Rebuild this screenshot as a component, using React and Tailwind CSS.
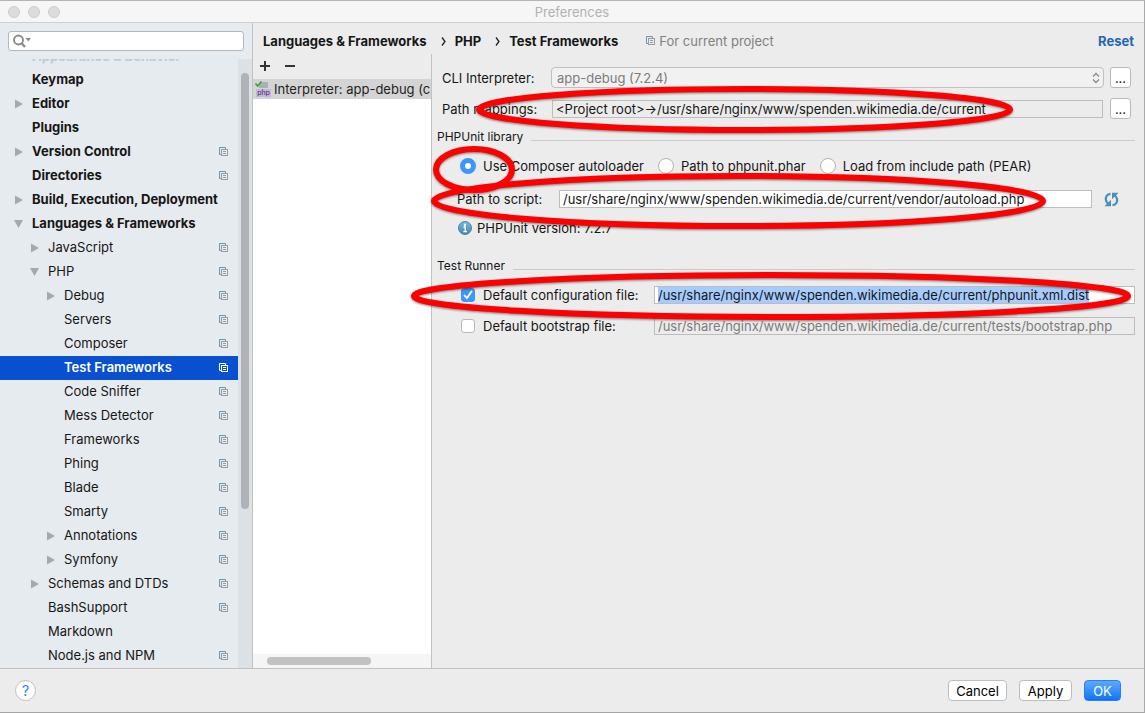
import { useEffect, useRef } from "react";

const tree = [
  { label: "Keymap", level: 0 },
  { label: "Editor", level: 0, arrow: "right" },
  { label: "Plugins", level: 0 },
  { label: "Version Control", level: 0, arrow: "right", project: true },
  { label: "Directories", level: 0, project: true },
  { label: "Build, Execution, Deployment", level: 0, arrow: "right" },
  { label: "Languages & Frameworks", level: 0, arrow: "down" },
  { label: "JavaScript", level: 1, arrow: "right", project: true },
  { label: "PHP", level: 1, arrow: "down", project: true },
  { label: "Debug", level: 2, arrow: "right", project: true },
  { label: "Servers", level: 2, project: true },
  { label: "Composer", level: 2, project: true },
  { label: "Test Frameworks", level: 2, project: true, selected: true },
  { label: "Code Sniffer", level: 2, project: true },
  { label: "Mess Detector", level: 2, project: true },
  { label: "Frameworks", level: 2, project: true },
  { label: "Phing", level: 2, project: true },
  { label: "Blade", level: 2, project: true },
  { label: "Smarty", level: 2, project: true },
  { label: "Annotations", level: 2, arrow: "right", project: true },
  { label: "Symfony", level: 2, arrow: "right", project: true },
  { label: "Schemas and DTDs", level: 1, arrow: "right", project: true },
  { label: "BashSupport", level: 1, project: true },
  { label: "Markdown", level: 1 },
  { label: "Node.js and NPM", level: 1, project: true },
];

const indents = ["pl-[14px]", "pl-[30px]", "pl-[46px]"];

function ProjectIcon({ light }) {
  const back = light ? "#ffffff" : "#5f9ab8";
  const front = light ? "#ffffff" : "#9a9da0";
  return (
    <svg width="10" height="10" viewBox="0 0 10 10" className="shrink-0" aria-hidden="true">
      <path d="M6.500 2V0.500H0.500V7.500H2" fill="none" stroke={back} />
      <rect x="2.500" y="2.500" width="6" height="6" fill="none" stroke={front} />
      <path d="M4 4.500H7M4 6.500H7" stroke={front} />
    </svg>
  );
}

function Arrow({ dir }) {
  return (
    <svg width="10" height="10" viewBox="0 0 10 10" className="shrink-0" aria-hidden="true">
      {dir === "right" && <path d="M1 0.500L9 5L1 9.500Z" fill="#a8a8a8" />}
      {dir === "down" && <path d="M0 1H9L4.500 9Z" fill="#a8a8a8" />}
    </svg>
  );
}

function TreeRow({ item }) {
  const weight = item.level === 0 ? "font-bold" : item.selected ? "font-semibold" : "";
  const colors = item.selected ? "bg-[#0850d0] text-white" : "text-[#161616]";
  return (
    <li>
      <button type="button" className={`flex h-6 w-full items-center gap-2 pr-[9px] text-left ${indents[item.level]} ${weight} ${colors}`}>
        <Arrow dir={item.arrow} />
        <span className="flex-1 pb-[2px] whitespace-nowrap">{item.label}</span>
        {item.project && <ProjectIcon light={item.selected} />}
      </button>
    </li>
  );
}

function Sidebar() {
  return (
    <aside className="flex w-[253px] shrink-0 flex-col border-r border-[#bfc2c5] bg-[#e6ebef]">
      <label className="mx-2 mt-2 mb-2 flex h-5 items-center rounded-[3px] border border-[#b4b8bb] bg-white pl-1">
        <svg width="20" height="14" viewBox="0 0 20 14" className="shrink-0" aria-hidden="true">
          <circle cx="5.500" cy="6" r="4.500" fill="none" stroke="#8a8a8a" strokeWidth="1.900" />
          <path d="M8.500 9L12 13" stroke="#8a8a8a" strokeWidth="2.200" />
          <path d="M12.500 4H18L15.250 7.500Z" fill="#8a8a8a" />
        </svg>
        <input type="text" aria-label="Search settings" className="h-full min-w-0 flex-1 bg-transparent outline-none" />
      </label>
      <div className="flex min-h-0 flex-1">
        <nav className="min-w-0 flex-1 overflow-hidden">
          <ul className="-mt-[15px]">
            <li className="flex h-6 items-center pl-8 font-bold whitespace-nowrap text-[#c3cad0]">
              <span>Appearance &amp; Behavior</span>
            </li>
            {tree.map((item) => (
              <TreeRow key={item.label} item={item} />
            ))}
          </ul>
        </nav>
        <div className="w-[14px] bg-[#dce1e5] px-[3px] pt-[14px]">
          <div className="h-[436px] rounded-full bg-[#afb3b7]" />
        </div>
      </div>
    </aside>
  );
}

function FrameworkList() {
  return (
    <section className="flex w-[179px] shrink-0 flex-col border-r border-[#c2c2c2]">
      <div className="flex h-[25px] items-center gap-[13px] pb-[2px] pl-[6px]">
        <button type="button" aria-label="Add">
          <svg width="12" height="12" viewBox="0 0 12 12"><path d="M6 1V11M1 6H11" stroke="#333" strokeWidth="2" /></svg>
        </button>
        <button type="button" aria-label="Remove">
          <svg width="12" height="12" viewBox="0 0 12 12"><path d="M1 6H11" stroke="#333" strokeWidth="2" /></svg>
        </button>
      </div>
      <div className="flex min-h-0 flex-1 flex-col bg-white">
        <button type="button" className="flex h-5 w-full items-center gap-[3px] overflow-hidden bg-[#d4d4d4] pl-[2px] text-left text-[#1f1f1f]">
          <svg width="16" height="16" viewBox="0 0 16 16" className="shrink-0" aria-hidden="true">
            <path d="M5 1H13V7H4V5Z" fill="#a9b1b7" />
            <path d="M0.500 2.500L2.700 5L6.500 0.500" fill="none" stroke="#3fa62b" strokeWidth="1.700" />
            <rect x="1" y="8" width="15" height="8" fill="#c7b4e4" />
            <text x="8.500" y="14" textAnchor="middle" fontSize="7" fontFamily="Inter, sans-serif" fill="#3a3048">php</text>
          </svg>
          <span className="whitespace-nowrap">Interpreter: app-debug (c</span>
        </button>
        <div className="flex-1" />
        <div className="h-[14px] bg-[#f5f5f5] pt-[3px] pl-[14px]">
          <div className="h-2 w-[104px] rounded-full bg-[#c2c2c2]" />
        </div>
      </div>
    </section>
  );
}

function GroupTitle({ children }) {
  return (
    <div className="flex h-5 items-center gap-2 pl-[5px] text-xs">
      <h2>{children}</h2>
      <div className="mt-[7px] h-px flex-1 bg-[#cbcbcb]" />
    </div>
  );
}

function MoreButton({ label }) {
  return (
    <button type="button" aria-label={label} className="flex h-[21px] w-[21px] items-center justify-center rounded-[3px] border border-[#b9b9b9] bg-white">
      ...
    </button>
  );
}

function Radio({ id, label, checked }) {
  return (
    <div className="flex items-center gap-[7px]">
      <input
        type="radio"
        name="library"
        id={id}
        defaultChecked={checked}
        className="h-4 w-4 appearance-none rounded-full border border-[#b2b2b2] bg-white checked:border-[5px] checked:border-[#3b97fc]"
      />
      <label htmlFor={id} className="whitespace-nowrap">{label}</label>
    </div>
  );
}

function Check({ id, label, checked }) {
  return (
    <div className="flex w-[193px] shrink-0 items-center gap-2">
      <span className="grid">
        <input
          type="checkbox"
          id={id}
          defaultChecked={checked}
          className="peer col-start-1 row-start-1 h-[14px] w-[14px] appearance-none rounded-[3px] border border-[#b8b8b8] bg-white checked:border-[#3b97fc] checked:bg-[#3b97fc]"
        />
        <svg width="14" height="14" viewBox="0 0 14 14" className="pointer-events-none invisible col-start-1 row-start-1 peer-checked:visible" aria-hidden="true">
          <path d="M3.500 7.500L6 10L10.500 3.500" fill="none" stroke="#fff" strokeWidth="1.800" strokeLinecap="round" />
        </svg>
      </span>
      <label htmlFor={id} className="whitespace-nowrap">{label}</label>
    </div>
  );
}

function SettingsForm() {
  const configRef = useRef(null);
  useEffect(() => {
    configRef.current.focus();
    configRef.current.select();
  }, []);

  return (
    <form className="min-w-0 flex-1 pt-[13px] pr-[9px] text-[#161616]">
      <div className="flex h-[21px] items-center pl-[10px]">
        <label htmlFor="cli" className="w-[109px] shrink-0 whitespace-nowrap">CLI Interpreter:</label>
        <div className="grid min-w-0 flex-1 items-center">
          <select id="cli" disabled className="col-start-1 row-start-1 h-[21px] w-full appearance-none rounded-[4px] border border-[#c0c0c0] bg-[#f1f1f1] pl-[5px] text-[#7b7b7b] opacity-100">
            <option>app-debug (7.2.4)</option>
          </select>
          <svg width="8" height="12" viewBox="0 0 8 12" className="pointer-events-none col-start-1 row-start-1 mr-1 justify-self-end" aria-hidden="true">
            <path d="M1 4.500L4 1.500L7 4.500M1 7.500L4 10.500L7 7.500" fill="none" stroke="#8a8a8a" strokeWidth="1.300" />
          </svg>
        </div>
        <div className="mr-1 ml-[6px]"><MoreButton label="Choose interpreter" /></div>
      </div>

      <div className="mt-[10px] flex h-[21px] items-center pl-[10px]">
        <label htmlFor="mappings" className="w-[110px] shrink-0 whitespace-nowrap">Path mappings:</label>
        <input id="mappings" readOnly defaultValue="<Project root>→/usr/share/nginx/www/spenden.wikimedia.de/current" className="h-[18px] min-w-0 flex-1 border border-[#bdbdbd] bg-transparent px-[3px] outline-none" />
        <div className="mr-1 ml-[7px]"><MoreButton label="Edit path mappings" /></div>
      </div>

      <div className="mt-2"><GroupTitle>PHPUnit library</GroupTitle></div>

      <fieldset className="mt-[11px] flex gap-[14px] pl-7">
        <Radio id="composer" label="Use Composer autoloader" checked />
        <Radio id="phar" label="Path to phpunit.phar" />
        <Radio id="pear" label="Load from include path (PEAR)" />
      </fieldset>

      <div className="mt-4 flex h-[18px] items-center pr-4 pl-[25px]">
        <label htmlFor="script" className="w-[102px] shrink-0 whitespace-nowrap">Path to script:</label>
        <input id="script" defaultValue="/usr/share/nginx/www/spenden.wikimedia.de/current/vendor/autoload.php" className="mr-3 h-[18px] min-w-0 flex-1 border border-[#bdbdbd] bg-white px-[3px] outline-none" />
        <button type="button" aria-label="Refresh version">
          <svg width="15" height="15" viewBox="0 0 15 15">
            <path d="M6.500 1.800C3 2 1.300 5 2 8.200C2.300 9.500 3 10.700 4.500 12" fill="none" stroke="#4a8fb8" strokeWidth="2.200" />
            <path d="M0.500 14.200H7V7.800Z" fill="#4a8fb8" />
            <path d="M8.500 13.200C12 13 13.700 10 13 6.800C12.700 5.500 12 4.300 10.500 3" fill="none" stroke="#4a8fb8" strokeWidth="2.200" />
            <path d="M14.500 0.800H8V7.200Z" fill="#4a8fb8" />
          </svg>
        </button>
      </div>

      <div className="mt-[10px] flex h-5 items-center gap-[5px] pl-[26px]">
        <svg width="14" height="14" viewBox="0 0 14 14" aria-hidden="true">
          <defs>
            <linearGradient id="info" x1="0" y1="0" x2="0" y2="1">
              <stop offset="0" stopColor="#7db9d8" />
              <stop offset="1" stopColor="#3f86b0" />
            </linearGradient>
          </defs>
          <circle cx="7" cy="7" r="6.500" fill="url(#info)" stroke="#4587ac" />
          <circle cx="7" cy="3.700" r="1.200" fill="#fff" />
          <path d="M5.500 6H7.200V10.500M5.300 10.700H9" fill="none" stroke="#fff" strokeWidth="1.300" />
        </svg>
        <span>PHPUnit version: 7.2.7</span>
      </div>

      <div className="mt-[18px]"><GroupTitle>Test Runner</GroupTitle></div>

      <div className="mt-[10px] flex h-[18px] items-center pl-[29px]">
        <Check id="use-config" label="Default configuration file:" checked />
        <input
          ref={configRef}
          aria-label="Configuration file path"
          defaultValue="/usr/share/nginx/www/spenden.wikimedia.de/current/phpunit.xml.dist"
          className="h-[18px] min-w-0 flex-1 border border-[#bdbdbd] bg-white px-[3px] caret-transparent outline-none selection:bg-[#a6ccff] selection:text-[#161616]"
        />
      </div>
      <div className="mt-[13px] flex h-[18px] items-center pl-[29px]">
        <Check id="use-bootstrap" label="Default bootstrap file:" />
        <input
          disabled
          aria-label="Bootstrap file path"
          defaultValue="/usr/share/nginx/www/spenden.wikimedia.de/current/tests/bootstrap.php"
          className="h-[18px] min-w-0 flex-1 border border-[#bdbdbd] bg-transparent px-[3px] text-[#7b7b7b]"
        />
      </div>
    </form>
  );
}

function Annotations() {
  return (
    <svg width="1145" height="340" viewBox="0 0 1145 340" className="pointer-events-none absolute top-0 left-0 drop-shadow-[0_1px_1px_rgba(0,0,0,0.5)]" aria-hidden="true">
      <g fill="none" stroke="#fe0000" strokeWidth="6">
        <ellipse cx="744.500" cy="108.500" rx="265.500" ry="20.500" />
        <ellipse cx="474" cy="168.500" rx="38" ry="20.500" />
        <ellipse cx="738.500" cy="200" rx="304.500" ry="25" />
        <ellipse cx="771" cy="295" rx="357" ry="21" />
      </g>
    </svg>
  );
}

function Chevron() {
  return (
    <svg width="28" height="10" viewBox="0 0 28 10" className="shrink-0" aria-hidden="true">
      <path d="M15 1.500L18 5.500L15 9.500" fill="none" stroke="#222" strokeWidth="1.300" />
    </svg>
  );
}

export default function App() {
  return (
    <div className="relative flex h-screen min-h-[560px] flex-col overflow-hidden border-t border-r border-b border-t-[#b5b5b5] border-r-[#a9a9a9] border-b-[#a5a5a5] bg-[#ececec] font-[Inter,sans-serif] text-[13px] leading-4">
      <header className="relative flex h-[22px] shrink-0 items-center justify-center border-b border-[#cfcfcf] bg-[#f6f6f6]">
        <div className="absolute left-2 flex gap-2">
          <span className="h-3 w-3 rounded-full border border-[#cdcdcd] bg-[#dcdcdc]" />
          <span className="h-3 w-3 rounded-full border border-[#cdcdcd] bg-[#dcdcdc]" />
          <span className="h-3 w-3 rounded-full border border-[#cdcdcd] bg-[#dcdcdc]" />
        </div>
        <h1 className="text-[#b1b1b1]">Preferences</h1>
      </header>

      <div className="flex min-h-0 flex-1">
        <Sidebar />
        <main className="flex min-w-0 flex-1 flex-col">
          <div className="flex h-[31px] shrink-0 items-center pt-[5px] pr-[10px] pl-[10px] font-bold whitespace-nowrap text-[#161616]">
            <span>Languages &amp; Frameworks</span>
            <Chevron />
            <span>PHP</span>
            <Chevron />
            <span>Test Frameworks</span>
            <span className="ml-7 flex items-center gap-[3px] font-normal text-[#808080]">
              <ProjectIcon />
              For current project
            </span>
            <a href="#reset" className="ml-auto text-[#2467b3]">Reset</a>
          </div>
          <div className="flex min-h-0 flex-1">
            <FrameworkList />
            <SettingsForm />
          </div>
        </main>
      </div>

      <footer className="flex h-11 shrink-0 items-center gap-3 border-t border-[#c2c2c2] pr-[23px] pl-[15px]">
        <button type="button" aria-label="Help" className="mr-auto h-[21px] w-[21px] rounded-full border border-[#c0c0c0] bg-white text-sm text-[#1a7ff5]">?</button>
        <button type="button" className="h-[21px] w-[59px] rounded-[4px] border border-[#bdbdbd] bg-white text-black">Cancel</button>
        <button type="button" className="h-[21px] w-[53px] rounded-[4px] border border-[#bdbdbd] bg-white text-black">Apply</button>
        <button type="button" className="h-[21px] w-[37px] rounded-[4px] border border-[#2a80f0] bg-linear-to-b from-[#5aabfc] to-[#0a72fc] text-white">OK</button>
      </footer>

      <Annotations />
    </div>
  );
}
